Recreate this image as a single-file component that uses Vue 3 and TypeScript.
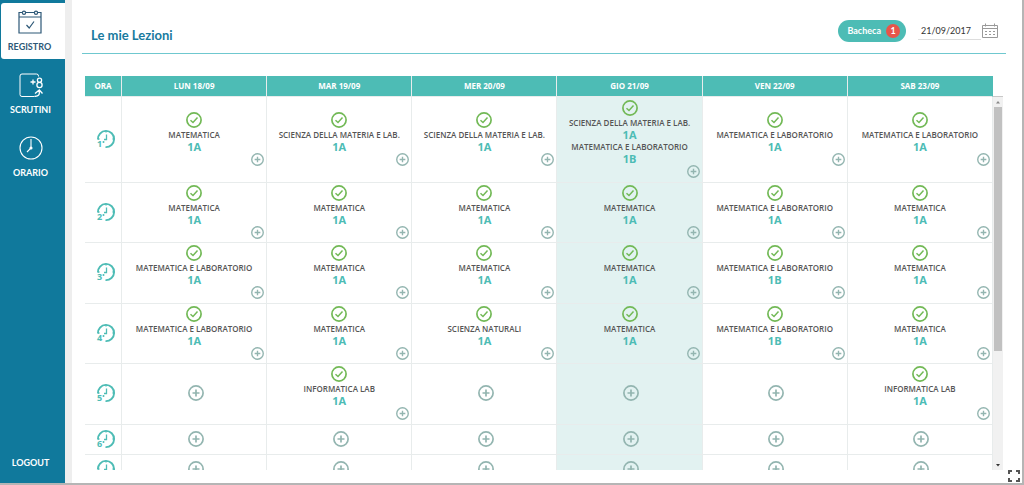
<script setup lang="ts">
import { ref } from 'vue'

interface Lesson {
  subject: string
  group: string
}

const days = ['LUN 18/09', 'MAR 19/09', 'MER 20/09', 'GIO 21/09', 'VEN 22/09', 'SAB 23/09']
const today = 3
const date = ref('21/09/2017')

const mat = (group = '1A'): Lesson => ({ subject: 'MATEMATICA', group })
const matLab = (group = '1A'): Lesson => ({ subject: 'MATEMATICA E LABORATORIO', group })
const materia = (): Lesson => ({ subject: 'SCIENZA DELLA MATERIA E LAB.', group: '1A' })
const natural = (): Lesson => ({ subject: 'SCIENZA NATURALI', group: '1A' })
const info = (): Lesson => ({ subject: 'INFORMATICA LAB', group: '1A' })

const hours: { label: string; slots: Lesson[][] }[] = [
  { label: '1', slots: [[mat()], [materia()], [materia()], [materia(), matLab('1B')], [matLab()], [matLab()]] },
  { label: '2', slots: [[mat()], [mat()], [mat()], [mat()], [matLab()], [mat()]] },
  { label: '3', slots: [[matLab()], [mat()], [mat()], [mat()], [matLab('1B')], [mat()]] },
  { label: '4', slots: [[matLab()], [mat()], [natural()], [mat()], [matLab('1B')], [mat()]] },
  { label: '5', slots: [[], [info()], [], [], [], [info()]] },
  { label: '6', slots: [[], [], [], [], [], []] },
  { label: '', slots: [[], [], [], [], [], []] },
]
</script>

<template>
  <div class="app">
    <nav class="sidebar">
      <a href="#registro" class="item active">
        <svg width="24" height="24" viewBox="0 0 24 24" fill="none" stroke="currentColor" stroke-width="1.2">
          <path d="M4.4 2.5H1v20.5h22V2.5h-3.4M7.6 2.5h8.8M1 7h22" />
          <circle cx="6" cy="2.7" r="1.6" />
          <circle cx="18" cy="2.7" r="1.6" />
          <path d="M8.500 15l2.700 3L16 11.500" />
        </svg>
        <span>REGISTRO</span>
      </a>
      <a href="#scrutini" class="item">
        <svg width="24" height="24" viewBox="0 0 24 24" fill="none" stroke="currentColor" stroke-width="1">
          <path d="M19.500 3.500V3a2 2 0 0 0-2-2H3a2 2 0 0 0-2 2v18.500a2 2 0 0 0 2 2h12.500" />
          <path d="M11.500 9h5M14 6.500v5" stroke-width="1.300" />
          <circle cx="20.500" cy="7.200" r="2.100" stroke-width="1.300" />
          <circle cx="20.500" cy="12" r="2.600" stroke-width="1.300" />
          <path d="M16 20.500l4.300-3.500 3.200 3.500M20.300 17.200v3.300q0 2.500-4.800 3" stroke-width="1.300" />
        </svg>
        <span>SCRUTINI</span>
      </a>
      <a href="#orario" class="item">
        <svg width="24" height="24" viewBox="0 0 24 24" fill="none" stroke="currentColor" stroke-width="1.1">
          <circle cx="12" cy="12" r="11" />
          <path d="M12 3v9l-4 4" />
          <circle cx="12" cy="12" r="1" fill="currentColor" />
        </svg>
        <span>ORARIO</span>
      </a>
      <a href="#logout" class="logout">LOGOUT</a>
    </nav>

    <main class="page">
      <header class="top">
        <h1>Le mie Lezioni</h1>
        <button type="button" class="board">Bacheca <span class="count">1</span></button>
        <input v-model="date" class="date" type="text" aria-label="Data" />
        <button type="button" class="icon-button" aria-label="Calendario">
          <svg width="16" height="16" viewBox="0 0 16 16" fill="none" stroke="#999">
            <path d="M.5 2.500h15v12H.5zM.5 5.500h15M3.500 .500v3M12.500 .500v3" />
            <path d="M3 8.500h10M3 11.500h10" stroke-dasharray="2 2" />
          </svg>
        </button>
      </header>

      <section class="schedule">
        <div class="viewport">
          <table>
            <thead>
              <tr>
                <th class="hour" scope="col">ORA</th>
                <th v-for="day in days" :key="day" scope="col">{{ day }}</th>
              </tr>
            </thead>
            <tbody>
              <tr v-for="(row, h) in hours" :key="h" :class="{ first: h === 0, empty: h > 4 }">
                <th class="hour" scope="row">
                  <svg width="20" height="20" viewBox="0 0 20 20">
                    <path d="M1.900 10.500A8.100 8.100 0 1 1 9.500 18.100" fill="none" stroke="#4dbcb5" stroke-width="1.900" />
                    <path d="M10.500 5.500V10.500H8M10 2v1.500M18 10h-1.500M2 10h1.500" fill="none" stroke="#4dbcb5" stroke-width="1.300" />
                    <text v-if="row.label" x="1" y="18" class="num">{{ row.label }}</text>
                    <circle v-if="row.label" cx="7.500" cy="13" r="1" fill="#4dbcb5" />
                  </svg>
                </th>
                <td v-for="(lessons, d) in row.slots" :key="d" :class="{ today: d === today }">
                  <div v-if="lessons.length" class="cell">
                    <svg class="check" width="16" height="16" viewBox="0 0 16 16" fill="none" stroke="#72b956">
                      <circle cx="8" cy="8" r="7.100" stroke-width="1.700" />
                      <path d="M4.500 8.200l2.500 2.300 4.500-5" stroke-width="1.500" />
                    </svg>
                    <template v-for="(lesson, i) in lessons" :key="i">
                      <span class="subject">{{ lesson.subject }}</span>
                      <span class="group">{{ lesson.group }}</span>
                    </template>
                    <button type="button" class="icon-button add" aria-label="Aggiungi">
                      <svg width="13" height="13" viewBox="0 0 16 16" fill="none" stroke="#93b5b0" stroke-width="1.700">
                        <circle cx="8" cy="8" r="7.100" />
                        <path d="M4.500 8h7M8 4.500v7" />
                      </svg>
                    </button>
                  </div>
                  <button v-else type="button" class="icon-button free" aria-label="Aggiungi">
                    <svg width="16" height="16" viewBox="0 0 16 16" fill="none" stroke="#93b5b0" stroke-width="1.700">
                      <circle cx="8" cy="8" r="7.100" />
                      <path d="M4.500 8h7M8 4.500v7" />
                    </svg>
                  </button>
                </td>
              </tr>
            </tbody>
          </table>
        </div>
        <div class="scrollbar">
          <svg width="10" height="10" viewBox="0 0 10 10"><path d="M3 6.500l2-2.500 2 2.500z" fill="#888" /></svg>
          <div class="track"><div class="thumb"></div></div>
          <svg width="10" height="10" viewBox="0 0 10 10"><path d="M3 4l2 2.500L7 4z" fill="#333" /></svg>
        </div>
      </section>
    </main>

    <button type="button" class="icon-button expand" aria-label="Schermo intero">
      <svg width="14" height="14" viewBox="0 0 14 14" fill="none" stroke="#555" stroke-width="2">
        <path d="M2 5V2h3M9 2h3v3M12 9v3H9M5 12H2V9" />
      </svg>
    </button>
  </div>
</template>

<style>
body {
  margin: 0;
}
</style>

<style scoped>
.app {
  position: relative;
  display: flex;
  box-sizing: border-box;
  height: 100vh;
  border-right: 2px solid #b5b5b5;
  border-bottom: 2px solid #b5b5b5;
  background: #fff;
  font-family: "Open Sans", sans-serif;
  overflow: hidden;
}
.sidebar {
  display: flex;
  flex: none;
  flex-direction: column;
  width: 65px;
  padding-top: 3px;
  box-sizing: border-box;
  background: #10799c;
  font: 700 9px/12px Lato, sans-serif;
}
.item {
  display: flex;
  flex-direction: column;
  align-items: center;
  gap: 7px;
  height: 56px;
  padding: 7px 4px 0 0;
  margin-bottom: 7px;
  box-sizing: border-box;
  color: #fff;
  text-decoration: none;
}
.item.active {
  margin-left: 1px;
  padding-right: 7px;
  border-radius: 3px 0 0 3px;
  color: #2d5877;
  background: #fff;
}
.logout {
  margin: auto 4px 14px 0;
  color: #fff;
  text-align: center;
  text-decoration: none;
}
.page {
  display: flex;
  flex: 1;
  flex-direction: column;
  min-width: 0;
  padding: 0 16px 13px 10px;
  border-left: 7px solid #eee;
}
.top {
  display: flex;
  align-items: center;
  height: 54px;
  padding: 8px 8px 0 9px;
  box-sizing: border-box;
  border-bottom: 1px solid #6fc8cf;
}
h1 {
  flex: 1;
  margin: 8px 0 0;
  color: #187a9e;
  font: 700 13px/18px Lato, sans-serif;
}
.board {
  display: flex;
  align-items: center;
  gap: 5px;
  height: 22px;
  padding: 0 6px 0 9px;
  border: 0;
  border-radius: 11px;
  color: #fff;
  background: #4dbcb5;
  font: 700 9px/14px Lato, sans-serif;
}
.count {
  width: 14px;
  border-radius: 7px;
  background: #e8554a;
  text-align: center;
}
.date {
  width: 63px;
  height: 18px;
  margin: 0 0 0 12px;
  padding: 0 3px;
  box-sizing: border-box;
  border: 0;
  border-bottom: 1px solid #ddd;
  color: #333;
  background: transparent;
  font: 9px/14px Lato, sans-serif;
}
.icon-button {
  display: block;
  padding: 0;
  border: 0;
  background: transparent;
}
.icon-button svg {
  display: block;
}
.top .icon-button {
  margin-left: 1px;
}
.schedule {
  display: flex;
  flex: 1;
  min-height: 0;
  margin: 22px 3px 0 3px;
}
.viewport {
  flex: 1;
  overflow: hidden;
}
table {
  width: 100%;
  border-spacing: 0;
  table-layout: fixed;
}
th,
td {
  box-sizing: border-box;
  padding: 0;
  border-right: 1px solid #e8ecec;
  border-bottom: 1px solid #e8ecec;
}
tbody td {
  padding-bottom: 2px;
}
thead th {
  height: 21px;
  color: #fff;
  background: #4dbcb5;
  font: 700 8px/12px "Open Sans", sans-serif;
}
thead th:last-child {
  border-right-color: #4dbcb5;
}
.hour {
  width: 37px;
}
tbody tr {
  height: 60px;
}
tbody tr:nth-child(odd) {
  height: 61px;
}
tbody tr.first {
  height: 86px;
}
tbody tr.empty {
  height: 30px;
}
tbody .hour svg {
  display: block;
  margin: 0 auto;
}
tbody .hour {
  padding: 0 0 2px 5px;
}
.num {
  fill: #4dbcb5;
  font: 700 9px "Open Sans", sans-serif;
}
td.today {
  background: #e2f2f1;
}
.cell {
  display: flex;
  flex-direction: column;
  align-items: center;
}
.check {
  margin-bottom: 1px;
}
.subject,
.group {
  line-height: 12px;
}
.subject {
  color: #555;
  font-size: 8px;
  font-weight: 600;
}
.group {
  color: #4dbcb5;
  font-size: 11px;
  font-weight: 700;
}
.add {
  align-self: flex-end;
  margin-right: 2px;
}
.free {
  margin: 0 auto;
  padding: 0 0 0 3px;
}
.scrollbar {
  display: flex;
  flex-direction: column;
  width: 10px;
  margin-top: 20px;
  border-top: 1px solid #c8c8c8;
  background: #f1f1f1;
}
.track {
  flex: 1;
}
.thumb {
  width: 8px;
  height: 69%;
  margin-left: 1px;
  background: #c1c1c1;
}
.expand {
  position: absolute;
  right: 1px;
  bottom: 0;
}
</style>
